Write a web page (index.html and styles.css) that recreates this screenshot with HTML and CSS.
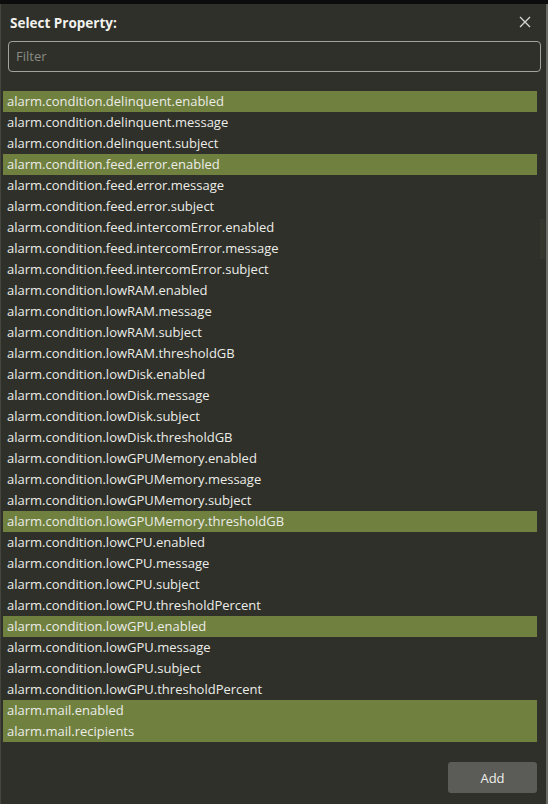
FILE: index.html
```html
<!DOCTYPE html>
<html>
<head>
<meta charset="utf-8">
<link rel="stylesheet" href="styles.css">
</head>
<body>
<div class="topbar"></div>
<div class="dialog">
  <div class="header">
    <span class="title">Select Property:</span>
    <svg class="close" width="14" height="14" viewBox="0 0 14 14"><path d="M2 2L12 12M12 2L2 12" stroke="#d8d8d4" stroke-width="1.3" fill="none"/></svg>
  </div>
  <div class="filter-wrap"><div class="filter">Filter</div></div>
  <div class="list-area">
    <div class="list">
      <div class="row sel">alarm.condition.delinquent.enabled</div>
      <div class="row">alarm.condition.delinquent.message</div>
      <div class="row">alarm.condition.delinquent.subject</div>
      <div class="row sel">alarm.condition.feed.error.enabled</div>
      <div class="row">alarm.condition.feed.error.message</div>
      <div class="row">alarm.condition.feed.error.subject</div>
      <div class="row">alarm.condition.feed.intercomError.enabled</div>
      <div class="row">alarm.condition.feed.intercomError.message</div>
      <div class="row">alarm.condition.feed.intercomError.subject</div>
      <div class="row">alarm.condition.lowRAM.enabled</div>
      <div class="row">alarm.condition.lowRAM.message</div>
      <div class="row">alarm.condition.lowRAM.subject</div>
      <div class="row">alarm.condition.lowRAM.thresholdGB</div>
      <div class="row">alarm.condition.lowDisk.enabled</div>
      <div class="row">alarm.condition.lowDisk.message</div>
      <div class="row">alarm.condition.lowDisk.subject</div>
      <div class="row">alarm.condition.lowDisk.thresholdGB</div>
      <div class="row">alarm.condition.lowGPUMemory.enabled</div>
      <div class="row">alarm.condition.lowGPUMemory.message</div>
      <div class="row">alarm.condition.lowGPUMemory.subject</div>
      <div class="row sel">alarm.condition.lowGPUMemory.thresholdGB</div>
      <div class="row">alarm.condition.lowCPU.enabled</div>
      <div class="row">alarm.condition.lowCPU.message</div>
      <div class="row">alarm.condition.lowCPU.subject</div>
      <div class="row">alarm.condition.lowCPU.thresholdPercent</div>
      <div class="row sel">alarm.condition.lowGPU.enabled</div>
      <div class="row">alarm.condition.lowGPU.message</div>
      <div class="row">alarm.condition.lowGPU.subject</div>
      <div class="row">alarm.condition.lowGPU.thresholdPercent</div>
      <div class="row sel">alarm.mail.enabled</div>
      <div class="row sel">alarm.mail.recipients</div>
    </div>
    <div class="scroll"><div class="thumb"></div></div>
  </div>
  <div class="footer"><button class="add">Add</button></div>
</div>
</body>
</html>
```
FILE: styles.css
```css
html, body {
  margin: 0;
  padding: 0;
  background: #2e3029;
}
body {
  width: 548px;
  height: 804px;
  overflow: hidden;
  font-family: "Open Sans", "Noto Sans", sans-serif;
  color: #e8e8e4;
}
.topbar {
  height: 4px;
  background: #0c0c0c;
}
.dialog {
  height: 800px;
  border-left: 1px solid #45473f;
  border-right: 2px solid #6a6b66;
  box-sizing: border-box;
  display: flex;
  flex-direction: column;
}
.header {
  height: 37px;
  display: flex;
  align-items: center;
  justify-content: space-between;
  padding: 0 14px 0 9px;
}
.title {
  font-weight: 700;
  font-size: 13.5px;
  color: #f2f2ee;
  margin-top: 0;
}
.close {
  margin-top: -1px;
}
.filter-wrap {
  padding: 0 5px 0 7px;
}
.filter {
  height: 31px;
  box-sizing: border-box;
  border: 1.5px solid #a3a39e;
  border-radius: 4px;
  font-size: 13px;
  color: #8a8b85;
  padding-left: 7px;
  line-height: 29px;
}
.list-area {
  margin-top: 19px;
  display: flex;
  padding-left: 2px;
}
.list {
  width: 534px;
}
.row {
  height: 21px;
  line-height: 21px;
  font-size: 13px;
  padding-left: 4px;
  color: #ecece8;
  white-space: nowrap;
}
.row.sel {
  background: #6f803f;
}
.scroll {
  width: 9px;
  position: relative;
}
.thumb {
  margin-top: 128px;
  margin-left: 3px;
  width: 5px;
  height: 40px;
  background: #35372f;
}
.footer {
  display: flex;
  justify-content: flex-end;
  padding: 20px 9px 0 0;
}
.add {
  width: 89px;
  height: 31px;
  background: #5b5c57;
  border: none;
  border-radius: 3px;
  color: #efefeb;
  font-family: "Open Sans", "Noto Sans", sans-serif;
  font-size: 13px;
}
```
